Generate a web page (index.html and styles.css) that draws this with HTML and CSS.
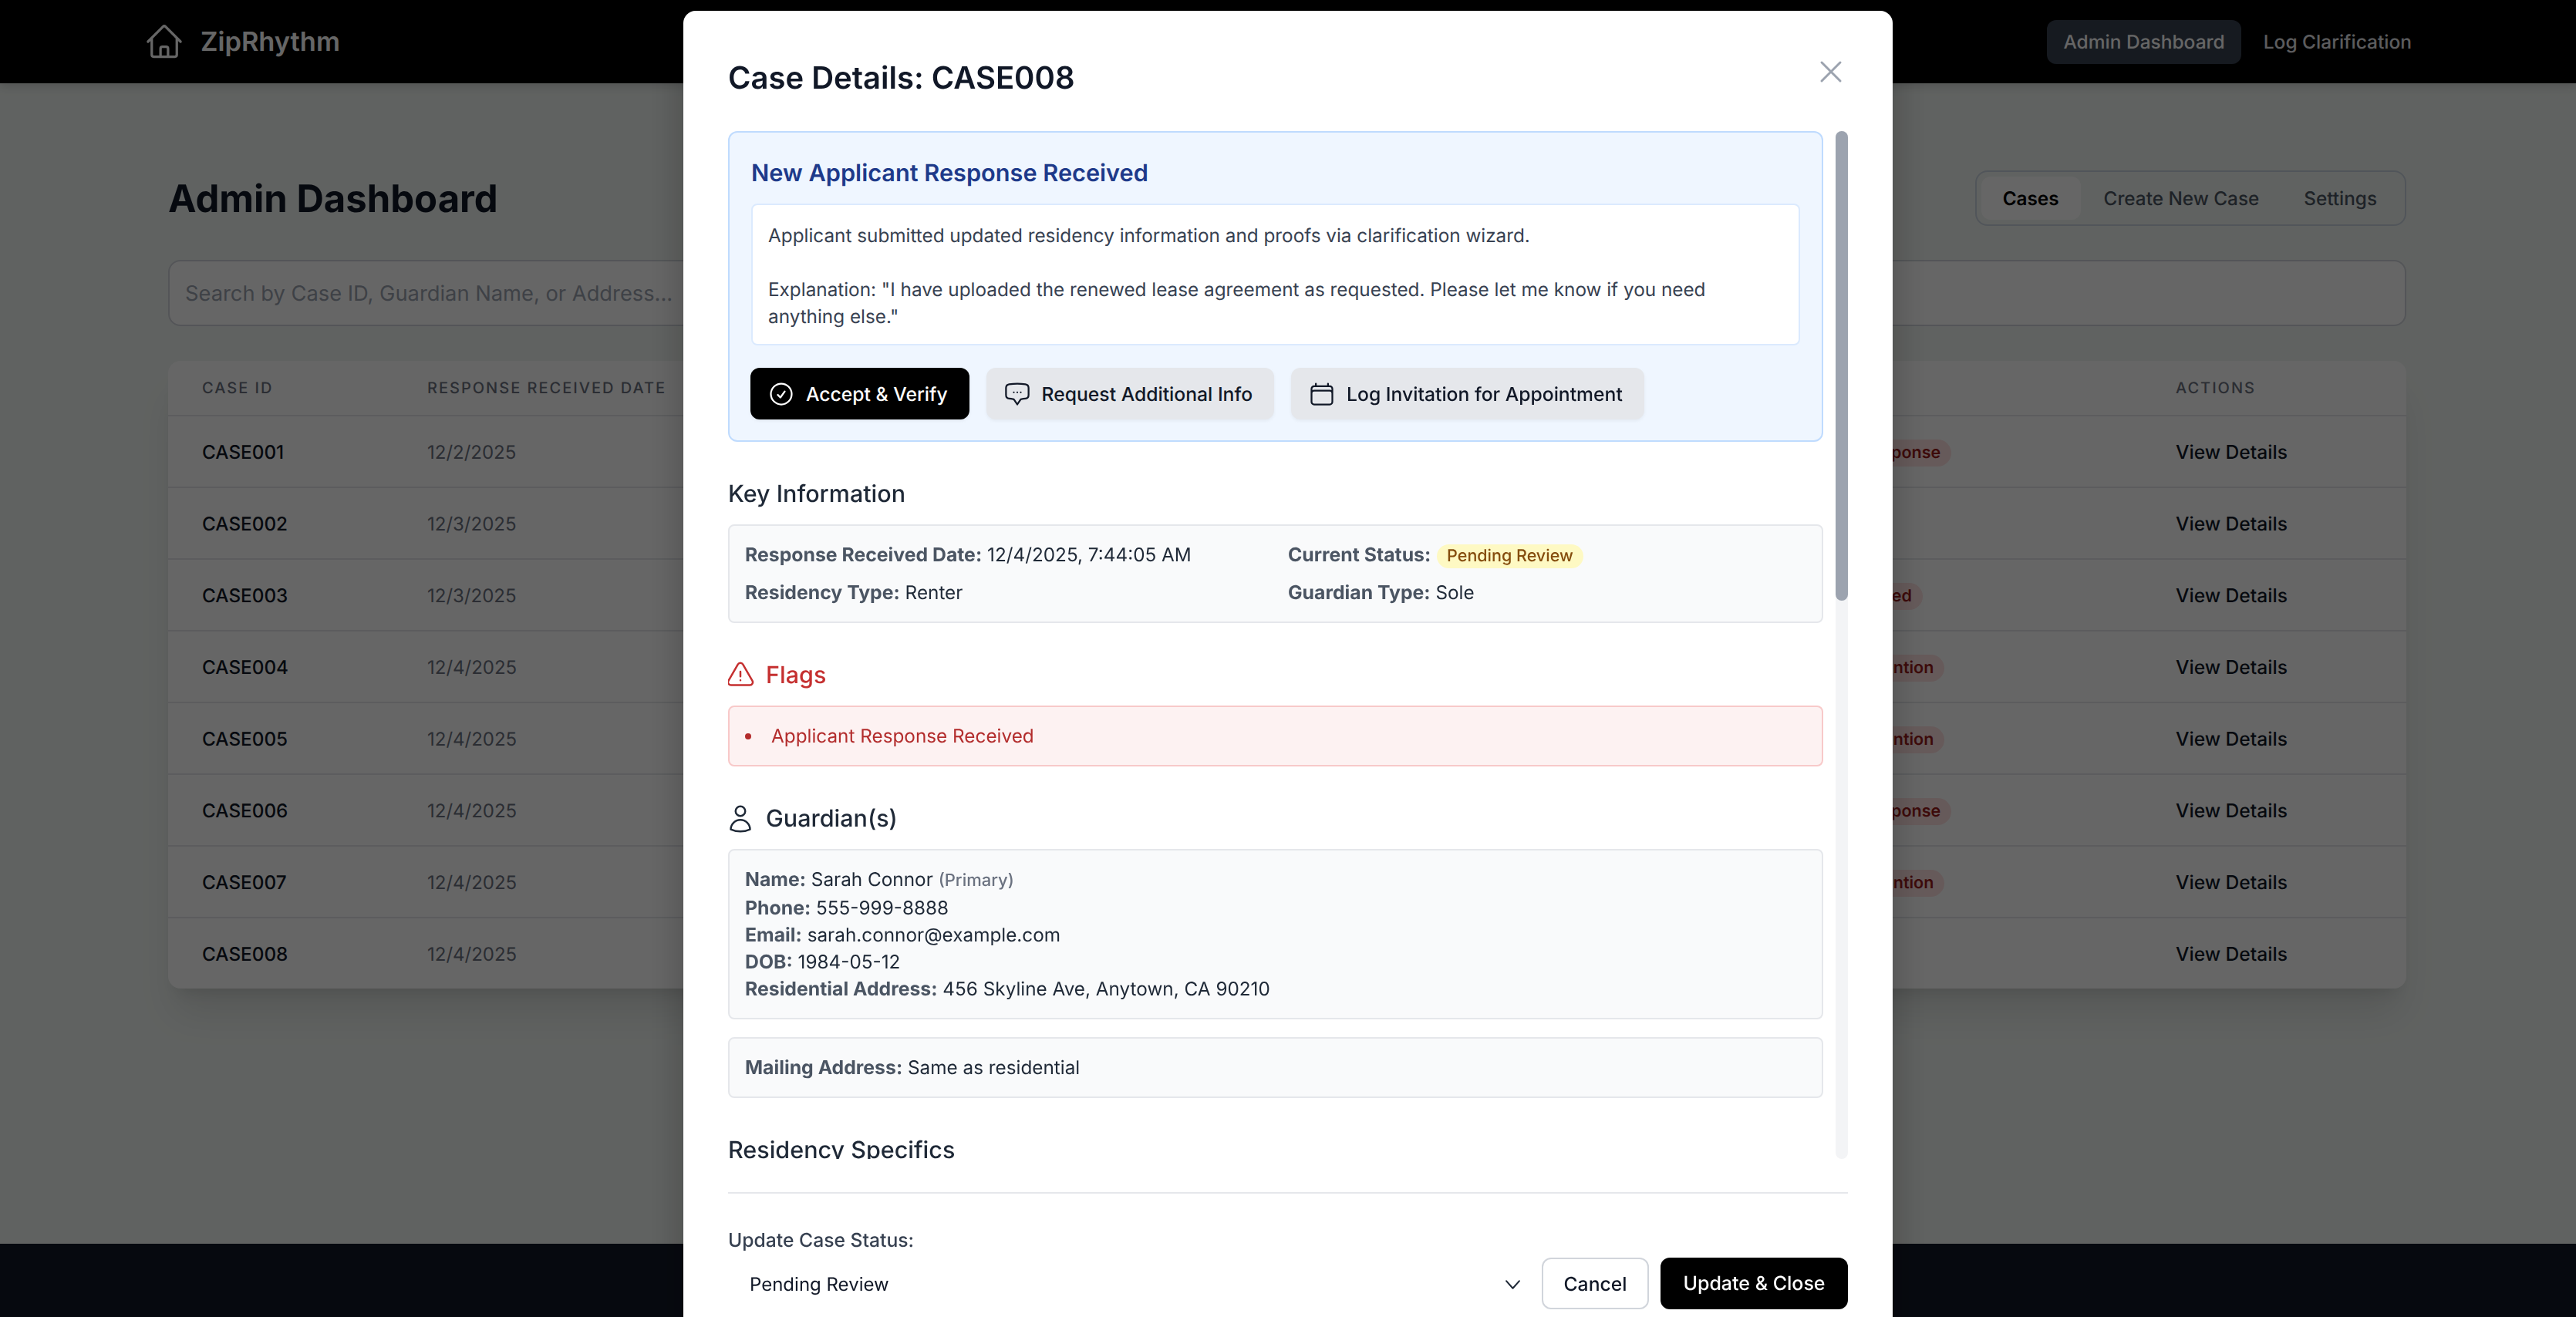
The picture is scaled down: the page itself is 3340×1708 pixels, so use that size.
FILE: index.html
```html
<!DOCTYPE html>
<html lang="en">
<head>
  <meta charset="UTF-8">
  <meta name="viewport" content="width=device-width, initial-scale=1.0">
  <title>ZipRhythm Admin Dashboard</title>
  <link rel="stylesheet" href="styles.css">
</head>
<body>
  <header class="topbar">
    <div class="brand">
      <svg class="brand-icon" viewBox="0 0 24 24"><path d="M2.25 12l8.954-8.955c.44-.439 1.152-.439 1.591 0L21.75 12M4.5 9.75v10.125c0 .621.504 1.125 1.125 1.125H9.75v-4.875c0-.621.504-1.125 1.125-1.125h2.25c.621 0 1.125.504 1.125 1.125V21h4.125c.621 0 1.125-.504 1.125-1.125V9.75M8.25 21h8.25"/></svg>
      <span>ZipRhythm</span>
    </div>
    <nav class="topnav">
      <a class="topnav-link active">Admin Dashboard</a>
      <a class="topnav-link">Log Clarification</a>
    </nav>
  </header>

  <main class="page">
    <div class="page-head">
      <h1>Admin Dashboard</h1>
      <div class="tabs">
        <button class="tab active">Cases</button>
        <button class="tab">Create New Case</button>
        <button class="tab">Settings</button>
      </div>
    </div>

    <input class="search" type="text" placeholder="Search by Case ID, Guardian Name, or Address...">

    <div class="table-card">
      <div class="table-row table-head">
        <div>Case ID</div>
        <div>Response Received Date</div>
        <div>Status</div>
        <div>Actions</div>
      </div>
      <div class="table-row">
        <div class="cell-id">CASE001</div>
        <div class="cell-date">12/2/2025</div>
        <div><span class="status">Awaiting User Response</span></div>
        <div class="cell-action">View Details</div>
      </div>
      <div class="table-row">
        <div class="cell-id">CASE002</div>
        <div class="cell-date">12/3/2025</div>
        <div><span class="status">Pending Review</span></div>
        <div class="cell-action">View Details</div>
      </div>
      <div class="table-row">
        <div class="cell-id">CASE003</div>
        <div class="cell-date">12/3/2025</div>
        <div><span class="status">Residency Approved</span></div>
        <div class="cell-action">View Details</div>
      </div>
      <div class="table-row">
        <div class="cell-id">CASE004</div>
        <div class="cell-date">12/4/2025</div>
        <div><span class="status">Needs Urgent Attention</span></div>
        <div class="cell-action">View Details</div>
      </div>
      <div class="table-row">
        <div class="cell-id">CASE005</div>
        <div class="cell-date">12/4/2025</div>
        <div><span class="status">Needs Urgent Attention</span></div>
        <div class="cell-action">View Details</div>
      </div>
      <div class="table-row">
        <div class="cell-id">CASE006</div>
        <div class="cell-date">12/4/2025</div>
        <div><span class="status">Awaiting User Response</span></div>
        <div class="cell-action">View Details</div>
      </div>
      <div class="table-row">
        <div class="cell-id">CASE007</div>
        <div class="cell-date">12/4/2025</div>
        <div><span class="status">Needs Urgent Attention</span></div>
        <div class="cell-action">View Details</div>
      </div>
      <div class="table-row">
        <div class="cell-id">CASE008</div>
        <div class="cell-date">12/4/2025</div>
        <div><span class="status">Pending Review</span></div>
        <div class="cell-action">View Details</div>
      </div>
    </div>
  </main>

  <footer class="site-footer"></footer>

  <!-- Case details modal -->
  <div class="overlay">
    <div class="modal">
      <div class="modal-head">
        <h2>Case Details: CASE008</h2>
        <button class="modal-close">
          <svg viewBox="0 0 24 24"><path d="M6 18L18 6M6 6l12 12"/></svg>
        </button>
      </div>

      <div class="modal-scroll">
        <div class="modal-body">
          <div class="response-box">
            <h3>New Applicant Response Received</h3>
            <div class="response-text">Applicant submitted updated residency information and proofs via clarification wizard.

Explanation: "I have uploaded the renewed lease agreement as requested. Please let me know if you need anything else."</div>
            <div class="response-actions">
              <button class="action-btn primary">
                <svg viewBox="0 0 24 24"><path d="M9 12.75L11.25 15 15 9.75M21 12a9 9 0 11-18 0 9 9 0 0118 0z"/></svg>
                Accept &amp; Verify
              </button>
              <button class="action-btn">
                <svg viewBox="0 0 24 24"><path d="M9 10.5h.01M12 10.5h.01M15 10.5h.01M2.25 12.76c0 1.6 1.123 2.994 2.707 3.227 1.129.166 2.27.293 3.423.379.35.026.67.21.865.501L12 21l2.755-4.133a1.14 1.14 0 01.865-.501 48.172 48.172 0 003.423-.379c1.584-.233 2.707-1.626 2.707-3.228V6.741c0-1.602-1.123-2.995-2.707-3.228A48.394 48.394 0 0012 3c-2.392 0-4.744.175-7.043.513C3.373 3.746 2.25 5.14 2.25 6.741v6.018z"/></svg>
                Request Additional Info
              </button>
              <button class="action-btn">
                <svg viewBox="0 0 24 24"><path d="M6.75 3v2.25M17.25 3v2.25M3 18.75V7.5a2.25 2.25 0 012.25-2.25h13.5A2.25 2.25 0 0121 7.5v11.25m-18 0A2.25 2.25 0 005.25 21h13.5A2.25 2.25 0 0021 18.75m-18 0v-7.5A2.25 2.25 0 015.25 9h13.5A2.25 2.25 0 0121 11.25v7.5"/></svg>
                Log Invitation for Appointment
              </button>
            </div>
          </div>

          <section class="section">
            <h4 class="section-title">Key Information</h4>
            <div class="info-box info-grid">
              <div><b>Response Received Date:</b> 12/4/2025, 7:44:05 AM</div>
              <div><b>Current Status:</b> <span class="pill">Pending Review</span></div>
              <div><b>Residency Type:</b> Renter</div>
              <div><b>Guardian Type:</b> Sole</div>
            </div>
          </section>

          <section class="section">
            <h4 class="section-title flags">
              <svg viewBox="0 0 24 24"><path d="M12 9v3.75m-9.303 3.376c-.866 1.5.217 3.374 1.948 3.374h14.71c1.73 0 2.813-1.874 1.948-3.374L13.949 3.378c-.866-1.5-3.032-1.5-3.898 0L2.697 16.126zM12 15.75h.007v.008H12v-.008z"/></svg>
              Flags
            </h4>
            <ul class="flag-list">
              <li>Applicant Response Received</li>
            </ul>
          </section>

          <section class="section">
            <h4 class="section-title">
              <svg viewBox="0 0 24 24"><path d="M15.75 6a3.75 3.75 0 11-7.5 0 3.75 3.75 0 017.5 0zM4.501 20.118a7.5 7.5 0 0114.998 0A17.933 17.933 0 0112 21.75c-2.676 0-5.216-.584-7.499-1.632z"/></svg>
              Guardian(s)
            </h4>
            <div class="info-box">
              <div><b>Name:</b> Sarah Connor <small>(Primary)</small></div>
              <div><b>Phone:</b> 555-999-8888</div>
              <div><b>Email:</b> sarah.connor@example.com</div>
              <div><b>DOB:</b> 1984-05-12</div>
              <div><b>Residential Address:</b> 456 Skyline Ave, Anytown, CA 90210</div>
            </div>
            <div class="info-box mailing">
              <div><b>Mailing Address:</b> Same as residential</div>
            </div>
          </section>

          <section class="section">
            <h4 class="section-title">Residency Specifics</h4>
          </section>
        </div>
        <div class="scrollbar">
          <div class="scrollbar-thumb"></div>
        </div>
      </div>

      <div class="modal-foot">
        <label class="foot-label">Update Case Status:</label>
        <div class="foot-row">
          <div class="select-wrap">
            <select class="status-select">
              <option>Pending Review</option>
            </select>
            <svg viewBox="0 0 24 24"><path d="M4 8l8 9 8-9"/></svg>
          </div>
          <button class="foot-btn cancel">Cancel</button>
          <button class="foot-btn save">Update &amp; Close</button>
        </div>
      </div>
    </div>
  </div>
</body>
</html>
```

FILE: styles.css
```css
* {
  box-sizing: border-box;
}

html, body {
  height: 1708px;
}

body {
  margin: 0;
  overflow: hidden;
  display: flex;
  flex-direction: column;
  background-color: #f0f5f2;
  font-family: Inter, "Liberation Sans", sans-serif;
  font-size: 24.3px;
  line-height: 35px;
  color: #111827;
  text-rendering: geometricPrecision;
}

button {
  font-family: inherit;
  border: none;
  background: none;
  padding: 0;
  text-rendering: geometricPrecision;
}

svg {
  fill: none;
  stroke: currentColor;
  stroke-width: 1.5;
  stroke-linecap: round;
  stroke-linejoin: round;
  flex-shrink: 0;
}

/* Top bar */
.topbar {
  height: 108px;
  flex-shrink: 0;
  background-color: #000;
  color: #fff;
  display: flex;
  align-items: center;
  justify-content: space-between;
  padding: 0 192px 0 187px;
  box-shadow: 0 4px 12px rgba(0, 0, 0, 0.15);
}

.brand {
  display: flex;
  align-items: center;
  gap: 21px;
  font-size: 34.4px;
  font-weight: 600;
}

.brand-icon {
  width: 52px;
  height: 52px;
}

.topnav {
  display: flex;
  gap: 8px;
}

.topnav-link {
  padding: 11px 21px;
  border-radius: 12px;
  font-size: 24.5px;
  font-weight: 500;
  line-height: 35px;
  color: #e5e7eb;
}

.topnav-link.active {
  background-color: #374151;
  color: #fff;
}

/* Page */
.page {
  flex: 1;
  padding: 113px 220px 0 218px;
}

.page-head {
  display: flex;
  align-items: center;
  justify-content: space-between;
  height: 72px;
}

.page-head h1 {
  margin: 2px 0 0;
  font-size: 49px;
  line-height: 72px;
  font-weight: 700;
  color: #111827;
}

.tabs {
  display: flex;
  gap: 2px;
  padding: 6px 8px 6px 6px;
  border: 2px solid #cbd5e1;
  border-radius: 16px;
}

.tab {
  height: 56px;
  padding: 0 28px;
  border-radius: 12px;
  font-size: 24.3px;
  font-weight: 500;
  color: #4b5563;
}

.tab.active {
  background-color: #fff;
  font-weight: 600;
  color: #000;
}

.search {
  display: block;
  width: 100%;
  height: 86px;
  margin-top: 44px;
  padding: 0 20px;
  border: 2px solid #d1d5db;
  border-radius: 16px;
  background-color: #fff;
  font-family: inherit;
  font-size: 27.3px;
  text-rendering: geometricPrecision;
}

.search::placeholder {
  color: #9ca3af;
}

.table-card {
  margin-top: 45px;
  background-color: #fff;
  border-radius: 16px;
  box-shadow: 0 40px 50px -10px rgba(0, 0, 0, 0.1), 0 16px 20px -12px rgba(0, 0, 0, 0.1);
}

.table-row {
  display: grid;
  grid-template-columns: 292px 1696px 571px 1fr;
  align-items: center;
  height: 93px;
  padding-left: 44px;
  padding-top: 1px;
  border-top: 2px solid #e5e7eb;
}

.table-head {
  height: 70px;
  border-top: none;
  font-size: 20px;
  font-weight: 500;
  letter-spacing: 2px;
  text-transform: uppercase;
  color: #6b7280;
}

.cell-id {
  font-weight: 500;
}

.cell-date {
  font-size: 24px;
  color: #6b7280;
}

.cell-action {
  font-size: 24.6px;
  font-weight: 500;
}

.status {
  display: inline-block;
  padding: 0 14px;
  border-radius: 18px;
  background-color: #fee2e2;
  font-size: 21.5px;
  line-height: 35px;
  font-weight: 600;
  color: #991b1b;
}

.site-footer {
  height: 95px;
  flex-shrink: 0;
  background-color: #111827;
}

/* Modal */
.overlay {
  position: fixed;
  top: 0;
  left: 0;
  width: 100%;
  height: 100%;
  display: flex;
  justify-content: center;
  align-items: flex-start;
  padding-top: 14px;
  overflow: hidden;
  background-color: rgba(0, 0, 0, 0.6);
}

.modal {
  width: 1568px;
  flex-shrink: 0;
  padding: 58px 58px 40px;
  background-color: #fff;
  border-radius: 16px;
  box-shadow: 0 20px 50px rgba(0, 0, 0, 0.25);
}

.modal-head {
  display: flex;
  justify-content: space-between;
  align-items: flex-start;
  height: 98px;
}

.modal-head h2 {
  margin: 1px 0 0;
  font-size: 40px;
  line-height: 56px;
  font-weight: 600;
  color: #111827;
}

.modal-close {
  width: 48px;
  height: 48px;
  margin: -3px -2px 0 0;
  color: #9ca3af;
}

.modal-close svg {
  width: 48px;
  height: 48px;
  display: block;
}

.modal-scroll {
  height: 1333px;
  display: flex;
  gap: 16px;
}

.modal-body {
  flex: 1;
  min-width: 0;
  height: 1333px;
  overflow: hidden;
}

.scrollbar {
  width: 16px;
  flex-shrink: 0;
  border-radius: 8px;
  background-color: #f3f4f6;
}

.scrollbar-thumb {
  height: 609px;
  border-radius: 8px;
  background-color: #9ca3af;
}

.response-box {
  padding: 28px 28px 27px;
  border: 2px solid #bfdbfe;
  border-radius: 12px;
  background-color: #eff6ff;
}

.response-box h3 {
  margin: 0 0 17px;
  padding-top: 3px;
  font-size: 30.7px;
  line-height: 44px;
  font-weight: 600;
  color: #1e3a8a;
}

.response-text {
  padding: 22px 20px 18px;
  border: 2px solid #dbeafe;
  border-radius: 8px;
  background-color: #fff;
  white-space: pre-wrap;
  color: #374151;
}

.response-actions {
  display: flex;
  gap: 22px;
  margin-top: 29px;
  margin-left: -1px;
}

.action-btn {
  display: flex;
  align-items: center;
  gap: 14px;
  height: 67px;
  padding: 0 28px 0 22px;
  border-radius: 12px;
  background-color: #e5e7eb;
  font-size: 24.7px;
  font-weight: 500;
  color: #111827;
  box-shadow: 0 2px 4px rgba(0, 0, 0, 0.05);
}

.action-btn svg {
  width: 36px;
  height: 36px;
}

.action-btn.primary {
  background-color: #000;
  color: #fff;
}

.section {
  margin-top: 46px;
}

.section-title {
  display: flex;
  align-items: center;
  gap: 13px;
  margin: 0 0 17px;
  font-size: 30.5px;
  line-height: 44px;
  font-weight: 500;
  color: #1f2937;
}

.section-title svg {
  width: 40px;
  height: 40px;
  margin-left: -4px;
}

.section-title.flags {
  color: #c53030;
}

.info-box {
  padding: 20px;
  border: 2px solid #e5e7eb;
  border-radius: 8px;
  background-color: #f9fafb;
  color: #1f2937;
}

.info-box b {
  font-size: 24.8px;
  font-weight: 700;
  color: #4b5563;
}

.info-box small {
  font-size: 22px;
  font-weight: 500;
  color: #6b7280;
}

.info-grid {
  display: grid;
  grid-template-columns: 1fr 1fr;
  gap: 14px 32px;
}

.mailing {
  margin-top: 23px;
}

.pill {
  display: inline-block;
  margin-left: 1px;
  padding: 0 13px;
  border-radius: 16px;
  background-color: #fef9c3;
  font-size: 21.5px;
  line-height: 31px;
  font-weight: 500;
  color: #854d0e;
}

.flag-list {
  margin: 0;
  padding: 20px;
  list-style: none;
  border: 2px solid #f8c9c9;
  border-radius: 8px;
  background-color: #fdf2f2;
  color: #b32d2d;
}

.flag-list li {
  display: flex;
  align-items: center;
  gap: 26px;
}

.flag-list li::before {
  content: "";
  width: 8px;
  height: 8px;
  border-radius: 50%;
  background-color: #b32d2d;
}

.modal-foot {
  margin-top: 43px;
  padding-top: 42px;
  border-top: 2px solid #e5e7eb;
}

.foot-label {
  display: block;
  font-size: 24.7px;
  font-weight: 500;
  line-height: 36px;
  color: #374151;
}

.foot-row {
  display: flex;
  align-items: center;
  gap: 15px;
  margin-top: 5px;
}

.select-wrap {
  flex: 1;
  position: relative;
  color: #1f2937;
}

.select-wrap svg {
  position: absolute;
  top: 21px;
  right: 10px;
  width: 25px;
  height: 25px;
  stroke-width: 2;
  pointer-events: none;
}

.status-select {
  display: block;
  width: 100%;
  height: 66px;
  padding: 2px 28px 0;
  border: none;
  appearance: none;
  background: #fff;
  font-family: inherit;
  font-size: 24px;
  color: #111827;
  text-rendering: geometricPrecision;
}

.foot-btn {
  height: 67px;
  border-radius: 12px;
  font-size: 24.7px;
  font-weight: 500;
}

.foot-btn.cancel {
  width: 139px;
  border: 2px solid #d1d5db;
  background-color: #fff;
  color: #111827;
}

.foot-btn.save {
  width: 243px;
  font-size: 25px;
  background-color: #000;
  color: #fff;
}
```
